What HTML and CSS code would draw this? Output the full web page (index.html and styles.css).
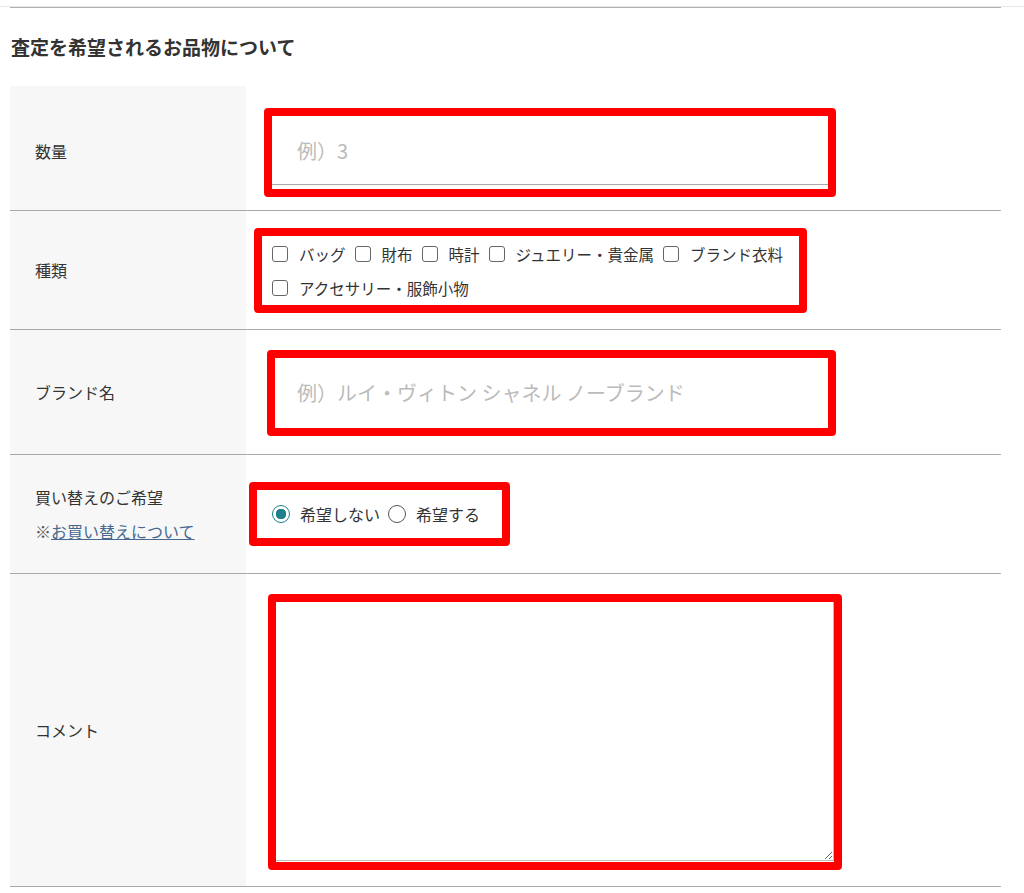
FILE: index.html
```html
<!DOCTYPE html>
<html lang="ja">
  <head>
    <meta charset="utf-8"/>
    <meta name="viewport" content="width=device-width, initial-scale=1"/>
    <title>査定を希望されるお品物について</title>
    <link rel="stylesheet" href="styles.css">
  </head>
  <body>
    <div class="page_edge"></div>
    <section class="item_form">
      <h2 class="item_form__title">査定を希望されるお品物について</h2>

      <div class="item_form__table">
        <div class="item_form__row item_form__row--qty">
          <div class="item_form__label">数量</div>
          <div class="item_form__field">
            <div class="mark mark--qty">
              <input type="text" class="text_input text_input--line" placeholder="例）3">
            </div>
          </div>
        </div>

        <div class="item_form__row item_form__row--kind">
          <div class="item_form__label">種類</div>
          <div class="item_form__field">
            <div class="mark mark--kind">
              <div class="choice_list">
                <label class="choice"><input type="checkbox" class="choice__box">バッグ</label>
                <label class="choice"><input type="checkbox" class="choice__box">財布</label>
                <label class="choice"><input type="checkbox" class="choice__box">時計</label>
                <label class="choice"><input type="checkbox" class="choice__box">ジュエリー・貴金属</label>
                <label class="choice"><input type="checkbox" class="choice__box">ブランド衣料</label>
                <label class="choice"><input type="checkbox" class="choice__box">アクセサリー・服飾小物</label>
              </div>
            </div>
          </div>
        </div>

        <div class="item_form__row item_form__row--brand">
          <div class="item_form__label">ブランド名</div>
          <div class="item_form__field">
            <div class="mark mark--brand">
              <input type="text" class="text_input" placeholder="例）ルイ・ヴィトン シャネル ノーブランド">
            </div>
          </div>
        </div>

        <div class="item_form__row item_form__row--swap">
          <div class="item_form__label item_form__label--stack">
            <span>買い替えのご希望</span>
            <span class="note">※<a href="#" class="note__link">お買い替えについて</a></span>
          </div>
          <div class="item_form__field">
            <div class="mark mark--swap">
              <div class="choice_list choice_list--radio">
                <label class="choice"><input type="radio" name="swap" class="choice__radio" checked>希望しない</label>
                <label class="choice"><input type="radio" name="swap" class="choice__radio">希望する</label>
              </div>
            </div>
          </div>
        </div>

        <div class="item_form__row item_form__row--comment">
          <div class="item_form__label">コメント</div>
          <div class="item_form__field">
            <div class="mark mark--comment">
              <textarea class="text_area"></textarea>
            </div>
          </div>
        </div>
      </div>
    </section>
  </body>
</html>
```

FILE: styles.css
```css
body {
  padding: 0;
  margin: 0;
  background: #FFF;
  color: #333;
  font-family: 'Noto Sans CJK JP', 'Noto Sans', sans-serif;
  font-size: 15px;
}

.page_edge {
  height: 6px;
  border-bottom: 1px solid #E8E8E8;
}

.item_form {
  margin: 0 23px 0 10px;
  border-top: 1px solid #B0B0B0;
}

.item_form__title {
  margin: 25px 0 26px 1px;
  font-size: 19px;
  font-weight: 700;
  line-height: 27px;
  color: #333;
}

.item_form__row {
  display: grid;
  grid-template-columns: 236px 1fr;
  box-sizing: border-box;
  border-bottom: 1px solid #AAA;
}

.item_form__row--qty { height: 125px; }
.item_form__row--kind { height: 119px; }
.item_form__row--brand { height: 125px; }
.item_form__row--swap { height: 119px; }
.item_form__row--comment { height: 313px; }

.item_form__label {
  display: flex;
  align-items: center;
  padding-left: 25px;
  background: #F7F7F7;
  font-size: 16px;
}

.item_form__row--qty .item_form__label {
  padding-top: 6px;
}

.item_form__label--stack {
  flex-direction: column;
  align-items: flex-start;
  justify-content: center;
  line-height: 34px;
}

.note {
  color: #555;
}

.note__link {
  color: #46698F;
  text-decoration: underline;
}

.item_form__field {
  display: flex;
  align-items: center;
}

/* red highlight frames around each field */
.mark {
  box-sizing: border-box;
  border: 8px solid #F00;
  border-radius: 4px;
  background: #FFF;
}

.mark--qty {
  width: 572px;
  height: 89px;
  margin: 9px 0 0 18px;
}

.mark--kind {
  width: 553px;
  height: 85px;
  margin-left: 8px;
}

.mark--brand {
  width: 569px;
  height: 86px;
  margin: 1px 0 0 21px;
}

.mark--swap {
  width: 261px;
  height: 64px;
  margin-left: 3px;
}

.mark--comment {
  width: 574px;
  height: 276px;
  margin: 3px 0 0 22px;
}

.text_input {
  box-sizing: border-box;
  width: 100%;
  height: 100%;
  padding: 0 0 0 22px;
  border: 0;
  outline: none;
  background: #FFF;
  font-family: inherit;
  font-size: 20px;
  color: #333;
}

.text_input--line {
  height: 69px;
  padding-left: 25px;
  border-bottom: 1px solid #AAA;
}

.text_input::placeholder {
  color: #BBB;
}

.text_area {
  display: block;
  box-sizing: border-box;
  width: 558px;
  height: 259px;
  margin: 0;
  border: 0;
  border-right: 1px solid #BBB;
  border-bottom: 1px solid #BBB;
  outline: none;
  font-family: inherit;
  font-size: 15px;
}

.choice_list {
  display: flex;
  flex-wrap: wrap;
  padding: 1px 0 0 10px;
  font-size: 15.5px;
  line-height: 34px;
}

.choice_list--radio {
  padding: 0 0 0 15px;
  font-size: 16px;
  line-height: 48px;
}

.choice {
  display: inline-flex;
  align-items: center;
  margin-right: 9px;
  color: #333;
  cursor: pointer;
}

.choice_list--radio .choice {
  margin-right: 8px;
}

.choice__box {
  appearance: none;
  box-sizing: border-box;
  width: 16px;
  height: 16px;
  margin: 0 11px 0 0;
  border: 1.5px solid #666;
  border-radius: 3px;
  background: #FFF;
}

.choice__radio {
  appearance: none;
  box-sizing: border-box;
  width: 18px;
  height: 18px;
  margin: 0 10px 0 0;
  border: 1.5px solid #555;
  border-radius: 50%;
  background: #FFF;
}

.choice__radio:checked {
  border: 1.5px solid #1F7F8A;
  background: radial-gradient(circle, #1F7F8A 0 5px, #FFF 5.5px);
}
```
